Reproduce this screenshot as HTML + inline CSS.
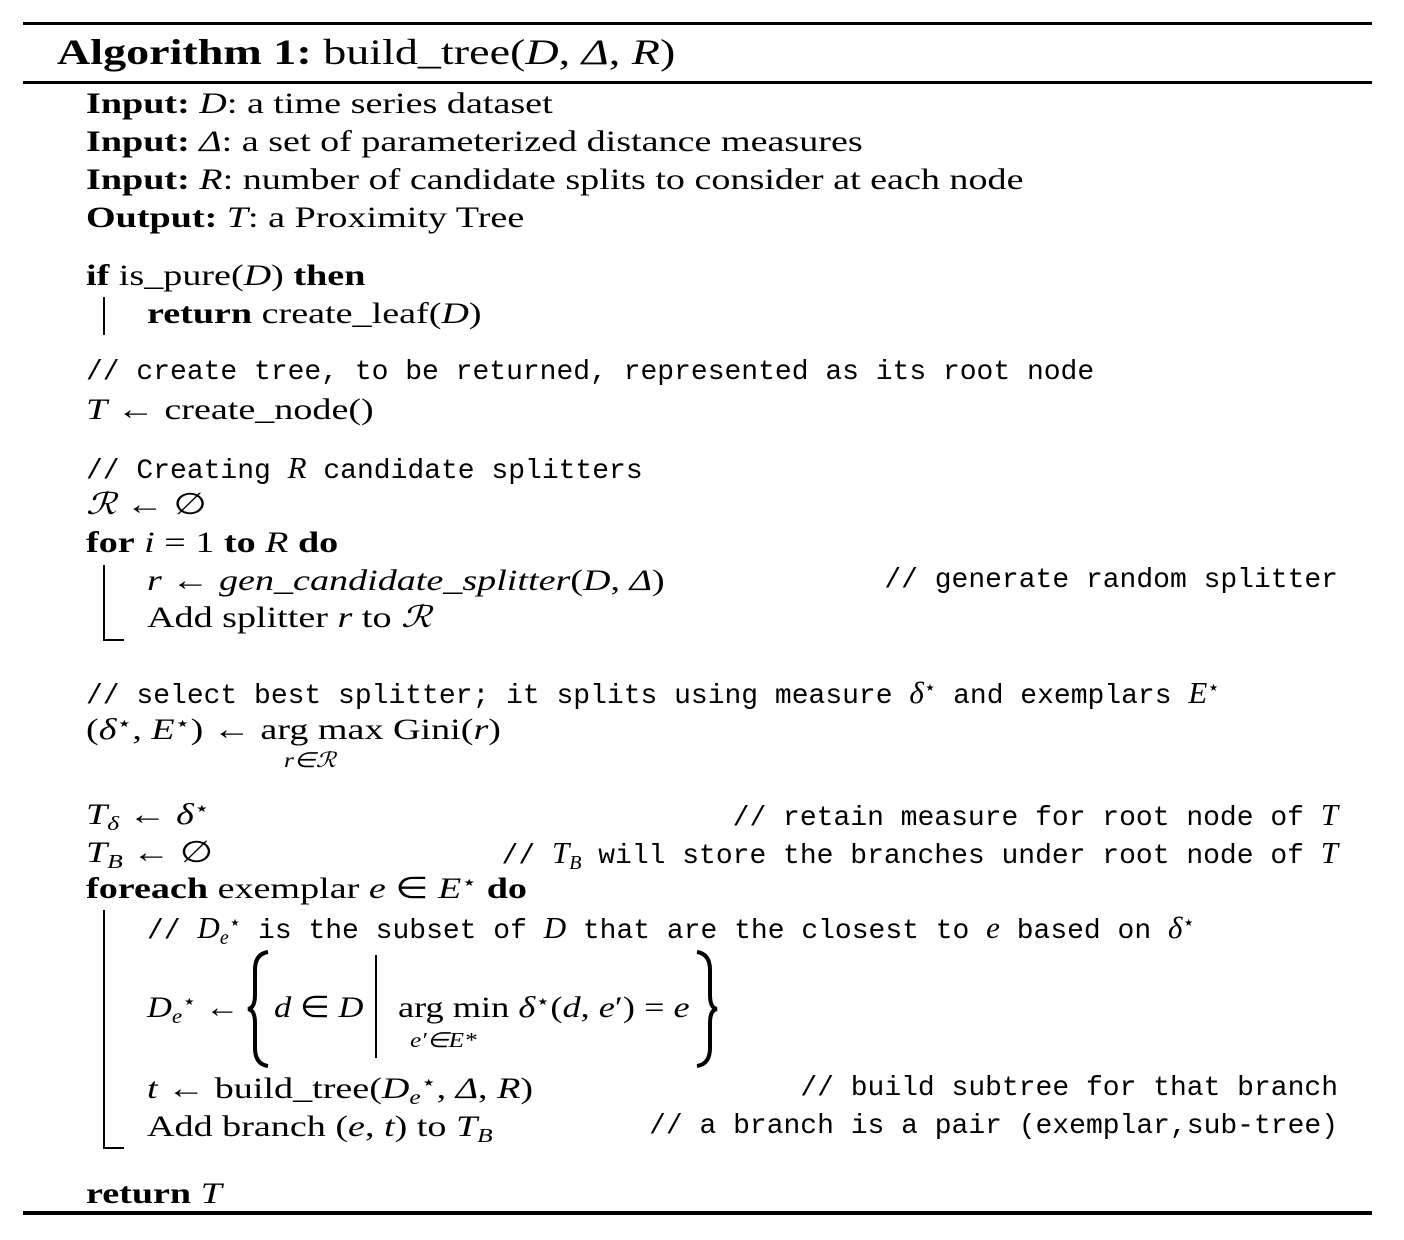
<!DOCTYPE html>
<html><head><meta charset="utf-8"><style>
body{margin:0;width:1404px;height:1240px;background:#fff;position:relative;overflow:hidden;font-family:"Liberation Serif",serif;color:#000}
.l{position:absolute;height:38px;line-height:38px;font-size:30px;white-space:pre}
.s{transform:scaleX(1.27);transform-origin:0 0}
.m{font-family:"Liberation Mono",monospace;font-size:28px}
.m .x{font-family:"Liberation Serif",serif;font-size:31px}
.r{position:absolute;background:#000}
b{font-weight:bold}
i{font-style:italic}
sub{font-size:20px;vertical-align:-6px;line-height:0}
sup{font-size:20px;vertical-align:9px;line-height:0}
.sm{position:absolute;font-size:21px;font-style:italic;white-space:pre;line-height:24px;transform:scaleX(1.2);transform-origin:0 0}
</style></head><body>
<div class="r" style="left:23px;top:22px;width:1349px;height:3px"></div>
<div class="r" style="left:23px;top:81px;width:1349px;height:3px"></div>
<div class="r" style="left:23px;top:1211px;width:1349px;height:4px"></div>
<div class="l" style="left:57px;top:30px;font-size:36px;line-height:44px;height:44px;transform:scaleX(1.28);transform-origin:0 0"><b>Algorithm 1:</b> build_tree(<i>D</i>, <i>Δ</i>, <i>R</i>)</div>

<div class="l s" style="left:86px;top:85px"><b>Input:</b> <i>D</i>: a time series dataset</div>
<div class="l s" style="left:86px;top:123px"><b>Input:</b> <i>Δ</i>: a set of parameterized distance measures</div>
<div class="l s" style="left:86px;top:161px"><b>Input:</b> <i>R</i>: number of candidate splits to consider at each node</div>
<div class="l s" style="left:86px;top:199px"><b>Output:</b> <i>T</i>: a Proximity Tree</div>

<div class="l s" style="left:86px;top:257px"><b>if</b> is_pure(<i>D</i>) <b>then</b></div>
<div class="r" style="left:103px;top:297px;width:2px;height:38px"></div>
<div class="l s" style="left:147px;top:295px"><b>return</b> create_leaf(<i>D</i>)</div>

<div class="l m" style="left:86px;top:354px">// create tree, to be returned, represented as its root node</div>
<div class="l s" style="left:86px;top:391px"><i>T</i> ← create_node()</div>

<div class="l m" style="left:86px;top:449px">// Creating <i class="x">R</i> candidate splitters</div>
<div class="l s" style="left:86px;top:486px"><i>ℛ</i> ← ∅</div>
<div class="l s" style="left:86px;top:524px"><b>for</b> <i>i</i> = 1 <b>to</b> <i>R</i> <b>do</b></div>
<div class="r" style="left:103px;top:565px;width:2px;height:76px"></div>
<div class="r" style="left:103px;top:639px;width:21px;height:2px"></div>
<div class="l s" style="left:147px;top:562px"><i>r</i> ← <i>gen_candidate_splitter</i>(<i>D</i>, <i>Δ</i>)</div>
<div class="l m" style="right:66px;top:562px">// generate random splitter</div>
<div class="l s" style="left:147px;top:599px">Add splitter <i>r</i> to <i>ℛ</i></div>

<div class="l m" style="left:86px;top:674px">// select best splitter; it splits using measure <span class="x"><i>δ</i><sup>⋆</sup></span> and exemplars <span class="x"><i>E</i><sup>⋆</sup></span></div>
<div class="l s" style="left:86px;top:711px">(<i>δ</i><sup>⋆</sup>, <i>E</i><sup>⋆</sup>) ← arg max Gini(<i>r</i>)</div>
<div class="sm" style="left:284px;top:748px">r∈ℛ</div>

<div class="l s" style="left:86px;top:796px"><i>T</i><sub><i>δ</i></sub> ← <i>δ</i><sup>⋆</sup></div>
<div class="l m" style="right:66px;top:796px">// retain measure for root node of <i class="x">T</i></div>
<div class="l s" style="left:86px;top:834px"><i>T</i><sub><i>B</i></sub> ← ∅</div>
<div class="l m" style="right:66px;top:834px">// <span class="x"><i>T</i><sub><i>B</i></sub></span> will store the branches under root node of <i class="x">T</i></div>
<div class="l s" style="left:86px;top:870px"><b>foreach</b> exemplar <i>e</i> ∈ <i>E</i><sup>⋆</sup> <b>do</b></div>
<div class="r" style="left:103px;top:910px;width:2px;height:239px"></div>
<div class="r" style="left:103px;top:1147px;width:21px;height:2px"></div>
<div class="l m" style="left:147px;top:909px">// <span class="x"><i>D</i><sub><i>e</i></sub><sup>⋆</sup></span> is the subset of <i class="x">D</i> that are the closest to <i class="x">e</i> based on <span class="x"><i>δ</i><sup>⋆</sup></span></div>
<div class="l s" style="left:147px;top:989px;transform:scaleX(1.15)"><i>D</i><sub><i>e</i></sub><sup>⋆</sup> ←</div>
<svg style="position:absolute;left:0;top:0" width="1404" height="1240">
<path d="M268 952 Q255 954 255 970 L255 995 Q255 1008 248 1009 Q255 1010 255 1023 L255 1048 Q255 1064 268 1066" fill="none" stroke="#000" stroke-width="4"/>
<path d="M697 952 Q710 954 710 970 L710 995 Q710 1008 717 1009 Q710 1010 710 1023 L710 1048 Q710 1064 697 1066" fill="none" stroke="#000" stroke-width="4"/>
<rect x="375" y="955" width="2" height="103" fill="#000"/>
</svg>
<div class="l s" style="left:274px;top:989px;transform:scaleX(1.15)"><i>d</i> ∈ <i>D</i></div>
<div class="l s" style="left:398px;top:989px;transform:scaleX(1.21)">arg min <i>δ</i><sup>⋆</sup>(<i>d</i>, <i>e</i>′) = <i>e</i></div>
<div class="sm" style="left:410px;top:1028px">e′∈E*</div>
<div class="l s" style="left:147px;top:1070px"><i>t</i> ← build_tree(<i>D</i><sub><i>e</i></sub><sup>⋆</sup>, <i>Δ</i>, <i>R</i>)</div>
<div class="l m" style="right:66px;top:1070px">// build subtree for that branch</div>
<div class="l s" style="left:147px;top:1108px">Add branch (<i>e</i>, <i>t</i>) to <i>T</i><sub><i>B</i></sub></div>
<div class="l m" style="right:66px;top:1108px">// a branch is a pair (exemplar,sub-tree)</div>

<div class="l s" style="left:86px;top:1175px"><b>return</b> <i>T</i></div>
</body></html>
